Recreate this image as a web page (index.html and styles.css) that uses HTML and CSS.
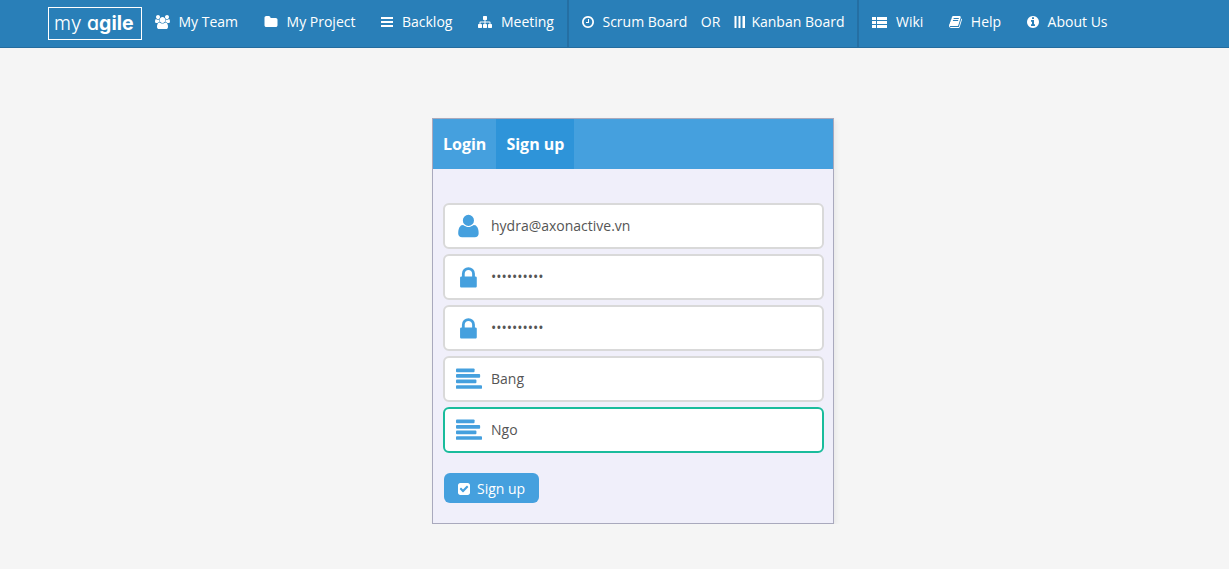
FILE: index.html
```html
<!DOCTYPE html>
<html lang="en">
<head>
<meta charset="utf-8">
<title>My Agile - Sign up</title>
<link rel="stylesheet" href="styles.css">
</head>
<body>
<svg class="sprite" aria-hidden="true">
  <symbol id="users" viewBox="0 0 1920 1792"><path d="M593 896q-162 5-265 128h-134q-82 0-138-40.5t-56-118.5q0-353 124-353 6 0 43.5 21t97.5 42.5 119 21.5q67 0 133-23-5 37-5 66 0 139 81 256zm1071 637q0 120-73 189.5t-194 69.5h-874q-121 0-194-69.5t-73-189.5q0-53 3.5-103.5t14-109 26.5-108.5 43-97.5 62-81 85.5-53.5 111.5-20q10 0 43 21.5t73 48 107 48 135 21.5 135-21.5 107-48 73-48 43-21.5q61 0 111.5 20t85.5 53.5 62 81 43 97.5 26.5 108.5 14 109 3.5 103.5zm-1024-1277q0 106-75 181t-181 75-181-75-75-181 75-181 181-75 181 75 75 181zm704 384q0 159-112.5 271.5t-271.5 112.5-271.5-112.5-112.5-271.5 112.5-271.5 271.5-112.5 271.5 112.5 112.5 271.5zm576 225q0 78-56 118.5t-138 40.5h-134q-103-123-265-128 81-117 81-256 0-29-5-66 66 23 133 23 59 0 119-21.5t97.5-42.5 43.5-21q124 0 124 353zm-128-609q0 106-75 181t-181 75-181-75-75-181 75-181 181-75 181 75 75 181z"/></symbol>
  <symbol id="folder" viewBox="64 0 1664 1792"><path d="M1728 608v704q0 92-66 158t-158 66h-1216q-92 0-158-66t-66-158v-960q0-92 66-158t158-66h320q92 0 158 66t66 158v32h672q92 0 158 66t66 158z"/></symbol>
  <symbol id="bars" viewBox="0 0 12 14"><path d="M0 2h12v2H0zM0 6h12v2H0zM0 10h12v2H0z"/></symbol>
  <symbol id="sitemap" viewBox="0 0 1792 1792"><path d="M1792 1248v320q0 40-28 68t-68 28h-320q-40 0-68-28t-28-68v-320q0-40 28-68t68-28h96v-192h-512v192h96q40 0 68 28t28 68v320q0 40-28 68t-68 28h-320q-40 0-68-28t-28-68v-320q0-40 28-68t68-28h96v-192h-512v192h96q40 0 68 28t28 68v320q0 40-28 68t-68 28h-320q-40 0-68-28t-28-68v-320q0-40 28-68t68-28h96v-192q0-52 38-90t90-38h512v-192h-96q-40 0-68-28t-28-68v-320q0-40 28-68t68-28h320q40 0 68 28t28 68v320q0 40-28 68t-68 28h-96v192h512q52 0 90 38t38 90v192h96q40 0 68 28t28 68z"/></symbol>
  <symbol id="clock" viewBox="128 0 1536 1792"><path d="M1024 544v448q0 14-9 23t-23 9h-320q-14 0-23-9t-9-23v-64q0-14 9-23t23-9h224v-352q0-14 9-23t23-9h64q14 0 23 9t9 23zm416 352q0-148-73-273t-198-198-273-73-273 73-198 198-73 273 73 273 198 198 273 73 273-73 198-198 73-273zm224 0q0 209-103 385.5t-279.5 279.5-385.5 103-385.5-103-279.5-279.5-103-385.5 103-385.5 279.5-279.5 385.5-103 385.5 103 279.5 279.5 103 385.5z"/></symbol>
  <symbol id="columns" viewBox="0 0 12 14"><path d="M.5 1h2v12h-2zM4.500 1h2v12h-2zM8.500 1h2.500v12h-2.500z"/></symbol>
  <symbol id="list" viewBox="0 0 15 14"><path d="M0 2h4v3H0zM5 2h10v3H5zM0 6h4v3H0zM5 6h10v3H5zM0 10h4v3H0zM5 10h10v3H5z"/></symbol>
  <symbol id="book" viewBox="64 0 1664 1792"><path d="M1703 478q40 57 18 129l-275 906q-19 64-76.5 107.5t-122.5 43.5h-923q-77 0-148.5-53.5t-99.5-131.5q-24-67-2-127 0-4 3-27t4-37q1-8-3-21.5t-3-19.5q2-11 8-21t16.5-23.5 16.5-23.5q23-38 45-91.5t30-91.5q3-10 .5-30t-.5-28q3-11 17-28t17-23q21-36 42-92t25-90q1-9-2.5-32t.5-28q4-13 22-30.5t22-22.5q19-26 42.5-84.5t27.5-96.5q1-8-3-25.5t-2-26.5q2-8 9-18t18-23 17-21q8-12 16.5-30.5t15-35 16-36 19.5-32 26.5-23.5 36-11.5 47.5 5.5l-1 3q38-9 51-9h761q74 0 114 56t18 130l-274 906q-36 119-71.5 153.5t-128.5 34.5h-869q-27 0-38 15-11 16-1 43 24 70 144 70h923q29 0 56-15.5t35-41.5l300-987q7-22 5-57 38 15 59 43zm-1064 2q-4 13 2 22.5t20 9.5h608q13 0 25.5-9.5t16.5-22.5l21-64q4-13-2-22.5t-20-9.5h-608q-13 0-25.5 9.5t-16.5 22.5zm-83 256q-4 13 2 22.5t20 9.5h608q13 0 25.5-9.5t16.5-22.5l21-64q4-13-2-22.5t-20-9.5h-608q-13 0-25.5 9.5t-16.5 22.5z"/></symbol>
  <symbol id="info" viewBox="128 0 1536 1792"><path d="M1152 1376v-160q0-14-9-23t-23-9h-96v-512q0-14-9-23t-23-9h-320q-14 0-23 9t-9 23v160q0 14 9 23t23 9h96v320h-96q-14 0-23 9t-9 23v160q0 14 9 23t23 9h448q14 0 23-9t9-23zm-128-896v-160q0-14-9-23t-23-9h-192q-14 0-23 9t-9 23v160q0 14 9 23t23 9h192q14 0 23-9t9-23zm640 416q0 209-103 385.5t-279.5 279.5-385.5 103-385.5-103-279.5-279.5-103-385.5 103-385.5 279.5-279.5 385.5-103 385.5 103 279.5 279.5 103 385.5z"/></symbol>
  <symbol id="user" viewBox="40 0 1792 1792"><path d="M1600 1405q0 120-73 189.5t-194 69.5h-874q-121 0-194-69.5t-73-189.5q0-53 3.5-103.5t14-109 26.5-108.5 43-97.5 62-81 85.5-53.5 111.5-20q9 0 42 21.5t74.5 48 108 48 133.500 21.5 133.500-21.5 108-48 74.5-48 42-21.5q61 0 111.5 20t85.5 53.5 62 81 43 97.5 26.5 108.5 14 109 3.5 103.5zm-320-893q0 159-112.5 271.5t-271.5 112.5-271.5-112.5-112.5-271.5 112.5-271.5 271.5-112.5 271.5 112.5 112.5 271.5z"/></symbol>
  <symbol id="lock" viewBox="40 -90 1792 1792"><path d="M640 768h512v-192q0-106-75-181t-181-75-181 75-75 181v192zm832 96v576q0 40-28 68t-68 28h-960q-40 0-68-28t-28-68v-576q0-40 28-68t68-28h32v-192q0-184 132-316t316-132 316 132 132 316v192h32q40 0 68 28t28 68z"/></symbol>
  <symbol id="align" viewBox="0 -40 1792 1792"><rect y="128" width="1280" height="256" rx="64"/><rect y="512" width="1664" height="256" rx="64"/><rect y="896" width="1408" height="256" rx="64"/><rect y="1280" width="1792" height="256" rx="64"/></symbol>
  <symbol id="check" viewBox="128 0 1536 1792"><path d="M813 1299l614-614q19-19 19-45t-19-45l-102-102q-19-19-45-19t-45 19l-467 467-211-211q-19-19-45-19t-45 19l-102 102q-19 19-19 45t19 45l358 358q19 19 45 19t45-19zm851-883v960q0 119-84.5 203.5t-203.5 84.5h-960q-119 0-203.5-84.5t-84.5-203.5v-960q0-119 84.5-203.5t203.5-84.5h960q119 0 203.5 84.5t84.5 203.5z"/></symbol>
</svg>

<header class="topbar">
  <a class="logo"><span class="logo-thin">my</span> <span class="logo-mid">a</span><span class="logo-bold">gile</span></a>
  <nav class="nav">
    <a class="nav-item"><svg class="icon w15"><use href="#users"/></svg>My Team</a>
    <a class="nav-item"><svg class="icon w14"><use href="#folder"/></svg>My Project</a>
    <a class="nav-item"><svg class="icon w12"><use href="#bars"/></svg>Backlog</a>
    <a class="nav-item"><svg class="icon w14"><use href="#sitemap"/></svg>Meeting</a>
    <span class="divider"></span>
    <a class="nav-item"><svg class="icon w12"><use href="#clock"/></svg>Scrum Board</a>
    <span class="nav-item joined">OR</span>
    <a class="nav-item joined tight"><svg class="icon w12"><use href="#columns"/></svg>Kanban Board</a>
    <span class="divider"></span>
    <a class="nav-item"><svg class="icon w15"><use href="#list"/></svg>Wiki</a>
    <a class="nav-item"><svg class="icon w13"><use href="#book"/></svg>Help</a>
    <a class="nav-item"><svg class="icon w12"><use href="#info"/></svg>About Us</a>
  </nav>
</header>

<main class="card">
  <div class="tabs">
    <a class="tab">Login</a>
    <a class="tab active">Sign up</a>
  </div>
  <form class="form">
    <label class="field"><svg class="field-icon"><use href="#user"/></svg><span class="value">hydra@axonactive.vn</span></label>
    <label class="field"><svg class="field-icon"><use href="#lock"/></svg><span class="value">••••••••••</span></label>
    <label class="field"><svg class="field-icon"><use href="#lock"/></svg><span class="value">••••••••••</span></label>
    <label class="field"><svg class="field-icon"><use href="#align"/></svg><span class="value">Bang</span></label>
    <label class="field focused"><svg class="field-icon"><use href="#align"/></svg><span class="value">Ngo</span></label>
    <button class="submit" type="button"><svg class="icon w12"><use href="#check"/></svg>Sign up</button>
  </form>
</main>
</body>
</html>
```
FILE: styles.css
```css
* { box-sizing: border-box; }

body {
  margin: 0;
  background: #f5f5f5;
  font-family: "Open Sans", sans-serif;
  font-size: 14px;
}

.sprite { display: none; }

svg { fill: currentColor; flex: none; }

.topbar {
  display: flex;
  height: 48px;
  padding-left: 48px;
  background: #297fb8;
  border-bottom: 1px solid #246c9e;
  color: #fff;
}

.logo {
  width: 94px;
  height: 33px;
  margin-top: 7px;
  padding-left: 5px;
  border: 1px solid #fff;
  font-family: Inter, sans-serif;
  font-feature-settings: "cv11";
  font-size: 19.5px;
  line-height: 30px;
  white-space: nowrap;
}
.logo-thin { font-weight: 300; }
.logo-mid { font-weight: 500; }
.logo-bold { font-weight: 700; }

.nav { display: flex; }

.nav-item {
  display: flex;
  align-items: center;
  gap: 8.5px;
  height: 43px;
  padding: 0 13px;
  line-height: 19px;
  white-space: nowrap;
}
.nav-item.joined { padding-left: 0.5px; }
.nav-item.tight { gap: 5.6px; }

.divider { width: 2px; background: #256fa3; }

.icon { height: 14px; }
.w12 { width: 12px; }
.w13 { width: 13px; }
.w14 { width: 14px; }
.w15 { width: 15px; }

.card {
  width: 402px;
  height: 406px;
  margin: 70px 0 0 432px;
  border: 1px solid #a9a9bd;
  background: #f0effa;
  box-shadow: 2px 2px 5px rgba(0, 0, 0, 0.06);
}

.tabs {
  display: flex;
  height: 50px;
  background: #45a0de;
}
.tab {
  padding: 0 10px;
  color: #fff;
  font-size: 16px;
  font-weight: 700;
  line-height: 50px;
}
.tab.active { background: #2e94d9; }

.form {
  display: flex;
  flex-direction: column;
  gap: 5px;
  padding: 34px 9px 0 10px;
}

.field {
  display: flex;
  align-items: center;
  gap: 9px;
  height: 46px;
  padding-left: 11px;
  border: 2px solid #d9d9d9;
  border-radius: 6px;
  background: #fff;
  color: #555;
}
.field.focused { border-color: #1abc9c; }

.value { padding-bottom: 2px; }

.field-icon {
  width: 26px;
  height: 26px;
  color: #45a0de;
}

.submit {
  display: flex;
  align-items: center;
  align-self: flex-start;
  gap: 7px;
  width: 95px;
  height: 30px;
  margin: 15px 0 0 1px;
  padding: 0 0 0 14px;
  border: 0;
  border-radius: 6px;
  background: #45a0de;
  color: #fff;
  font: inherit;
}
.submit .icon { margin-top: 1px; }
```
